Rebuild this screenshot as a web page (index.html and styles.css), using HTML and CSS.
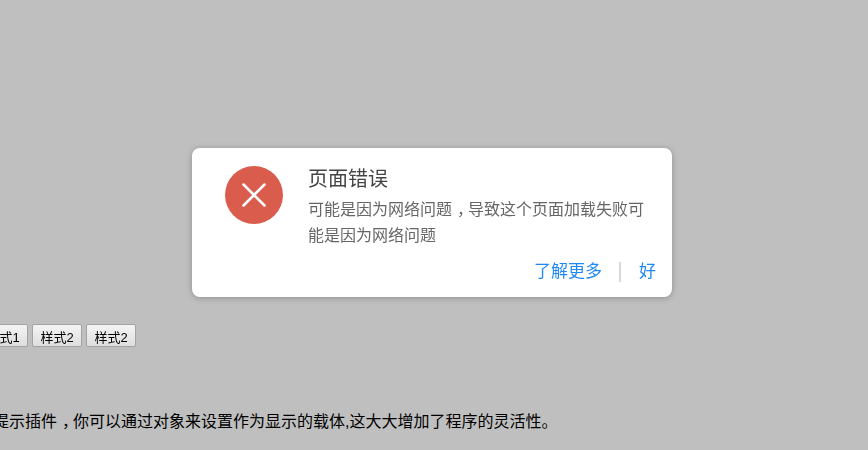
FILE: index.html
```html
<!DOCTYPE html>
<html lang="zh-CN">
<head>
    <meta charset="UTF-8">
    <title>页面错误</title>
    <link rel="stylesheet" href="styles.css">
</head>
<body>
    <div class="page">
        <div class="buttons">
            <button>样式1</button>
            <button>样式2</button>
            <button>样式2</button>
        </div>
        <p class="intro">提示插件<span class="comma">，</span>你可以通过对象来设置作为显示的载体,这大大增加了程序的灵活性。</p>
    </div>

    <div class="overlay"></div>
    <div class="dialog">
        <div class="dialog-main">
            <div class="dialog-icon">
                <svg width="24" height="24" viewBox="0 0 24 24">
                    <path d="M1.5 1.5L22.5 22.5M22.5 1.5L1.5 22.5" stroke="#fff" stroke-width="2.5" stroke-linecap="round" fill="none"/>
                </svg>
            </div>
            <div class="dialog-text">
                <h2>页面错误</h2>
                <p>可能是因为网络问题<span class="comma">，</span>导致这个页面加载失败可能是因为网络问题</p>
            </div>
        </div>
        <div class="dialog-actions">
            <a href="#">了解更多</a>
            <span class="divider"></span>
            <a href="#">好</a>
        </div>
    </div>
</body>
</html>
```

FILE: styles.css
```css
html, body {
    height: 100%;
}
body {
    margin: 0;
    overflow: hidden;
    background: #fff;
    font-family: "Liberation Sans", "Noto Sans CJK SC", sans-serif;
}
.page {
    margin-left: -22px;
    padding-top: 324px;
}
.buttons {
    display: flex;
    gap: 4px;
}
.buttons button {
    position: relative;
    z-index: 1;
    width: 50px;
    height: 23px;
    padding: 2px 0 0;
    font-family: inherit;
    font-size: 13px;
    color: #000;
    background: linear-gradient(#f4f4f4, #dedede);
    border: 1px solid #a3a3a3;
    border-radius: 2px;
}
.intro {
    margin: 63px 0 0 15px;
    font-size: 16px;
    line-height: 24px;
    color: #000;
    white-space: nowrap;
}
/* comma is centred in its cell, the advance stays one em */
.comma {
    padding-left: 5px;
    letter-spacing: -5px;
}
.overlay {
    position: fixed;
    inset: 0;
    background: rgba(0, 0, 0, 0.25);
}
.dialog {
    position: absolute;
    left: 192px;
    top: 148px;
    box-sizing: border-box;
    width: 480px;
    height: 149px;
    padding: 18px 16px 0 33px;
    background: #fff;
    border-radius: 8px;
    box-shadow: 0 1px 6px rgba(0, 0, 0, 0.25);
}
.dialog-main {
    display: flex;
    gap: 25px;
}
.dialog-icon {
    display: flex;
    align-items: center;
    justify-content: center;
    flex: none;
    width: 58px;
    height: 58px;
    background: #da5c4c;
    border-radius: 50%;
}
.dialog-text h2 {
    margin: -1px 0 4px;
    font-size: 20px;
    line-height: 28px;
    font-weight: normal;
    color: #444;
}
.dialog-text p {
    margin: 0;
    font-size: 16px;
    line-height: 26px;
    color: #666;
}
.dialog-actions {
    display: flex;
    align-items: center;
    justify-content: flex-end;
    gap: 17px;
    margin-top: 11px;
}
.dialog-actions a {
    font-size: 17px;
    line-height: 24px;
    color: #1e88f5;
    text-decoration: none;
}
.divider {
    width: 2px;
    height: 20px;
    margin-right: 1px;
    background: #d9d9d9;
}
```
